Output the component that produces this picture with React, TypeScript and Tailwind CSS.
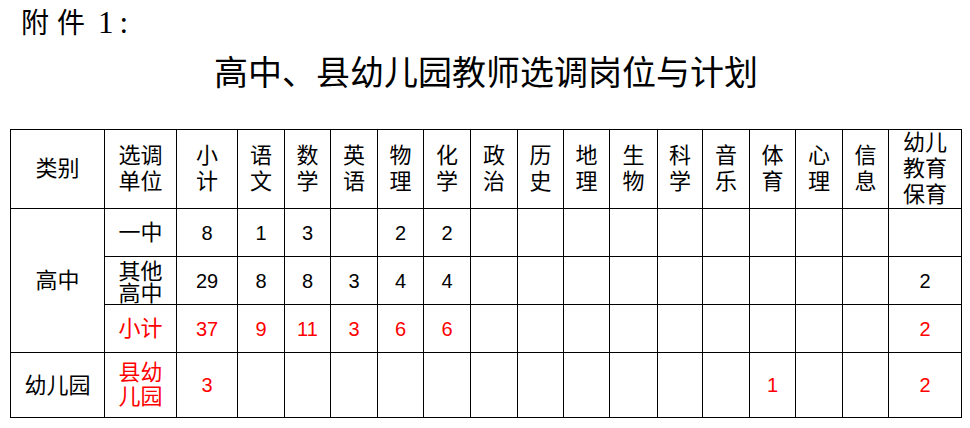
import React from "react";

const FONT = { fontFamily: '"Liberation Sans", "Noto Sans CJK SC", sans-serif' };

const widths = [94, 72, 61, 47, 46, 47, 46, 47, 47, 46, 46, 48, 45, 47, 46, 47, 46, 73];

const headers: string[][] = [
  ["类别"],
  ["选调", "单位"],
  ["小", "计"],
  ["语", "文"],
  ["数", "学"],
  ["英", "语"],
  ["物", "理"],
  ["化", "学"],
  ["政", "治"],
  ["历", "史"],
  ["地", "理"],
  ["生", "物"],
  ["科", "学"],
  ["音", "乐"],
  ["体", "育"],
  ["心", "理"],
  ["信", "息"],
  ["幼儿", "教育", "保育"],
];

type Cell = { v: string; red?: boolean };

const N = 16;

function row(vals: Record<number, string>, red = false): Cell[] {
  const out: Cell[] = [];
  for (let i = 0; i < N; i++) out.push({ v: vals[i] ?? "", red });
  return out;
}

const td = "border-[1.5px] border-black text-center align-middle p-0";

export default function App() {
  const r1 = row({ 0: "8", 1: "1", 2: "3", 4: "2", 5: "2" });
  const r2 = row({ 0: "29", 1: "8", 2: "8", 3: "3", 4: "4", 5: "4", 15: "2" });
  const r3 = row({ 0: "37", 1: "9", 2: "11", 3: "3", 4: "6", 5: "6", 15: "2" }, true);
  const r4 = row({ 0: "3", 12: "1", 15: "2" }, true);

  const nums = (cells: Cell[]) =>
    cells.map((c, i) => (
      <td
        key={i}
        className={`${td} text-[20px] ${c.red ? "text-[#f00]" : "text-black"}`}
      >
        {c.v}
      </td>
    ));

  return (
    <div className="w-[970px] h-[428px] bg-white text-black" style={FONT}>
      <div
        className="flex items-baseline pl-[21px] pt-[6px] text-[28px] leading-[34px]"
        style={{ fontFamily: '"Liberation Serif", "Noto Sans CJK SC", serif' }}
      >
        <span>附</span>
        <span className="ml-[8px]">件</span>
        <span className="ml-[13px] text-[31px]">1</span>
        <span className="ml-[6px] text-[31px]">:</span>
      </div>
      <div className="mt-[10px] text-center text-[34px] leading-[44px] pl-[2px]">
        高中、县幼儿园教师选调岗位与计划
      </div>
      <table className="mt-[34px] ml-[10px] border-collapse table-fixed w-[951px]">
        <colgroup>
          {widths.map((w, i) => (
            <col key={i} style={{ width: w }} />
          ))}
        </colgroup>
        <tbody>
          <tr className="h-[78px]">
            {headers.map((h, i) => (
              <td key={i} className={`${td} text-[22px] leading-[26px]`}>
                {h.map((line, j) => (
                  <div key={j}>{line}</div>
                ))}
              </td>
            ))}
          </tr>
          <tr className="h-[48px]">
            <td rowSpan={3} className={`${td} text-[22px]`}>
              高中
            </td>
            <td className={`${td} text-[22px]`}>一中</td>
            {nums(r1)}
          </tr>
          <tr className="h-[48px]">
            <td className={`${td} text-[22px] leading-[22px]`}>
              <div className="h-[46px] overflow-hidden flex flex-col justify-center pt-[4px]">
                <div>其他</div>
                <div>高中</div>
              </div>
            </td>
            {nums(r2)}
          </tr>
          <tr className="h-[48px]">
            <td className={`${td} text-[22px] text-[#f00]`}>小计</td>
            {nums(r3)}
          </tr>
          <tr className="h-[65px]">
            <td className={`${td} text-[22px]`}>幼儿园</td>
            <td className={`${td} text-[22px] leading-[24px] text-[#f00]`}>
              <div>县幼</div>
              <div>儿园</div>
            </td>
            {nums(r4)}
          </tr>
        </tbody>
      </table>
    </div>
  );
}
